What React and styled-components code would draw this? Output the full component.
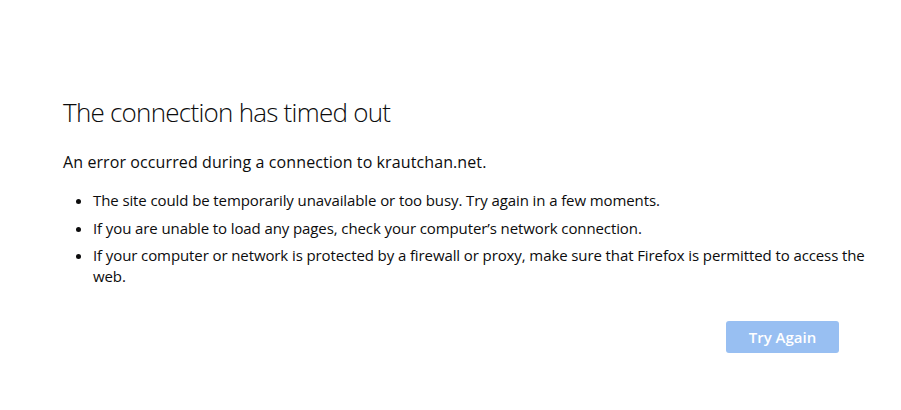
import React from 'react';
import styled, { createGlobalStyle } from 'styled-components';

const GlobalStyle = createGlobalStyle`
  html, body {
    margin: 0;
    padding: 0;
    background: #ffffff;
  }
  body {
    font-family: "Open Sans", "Noto Sans", sans-serif;
    color: #0c0c0d;
  }
`

const Page = styled.div`
  box-sizing: border-box;
  width: 901px;
  height: 410px;
  padding: 94px 0 0 63px;
`

const Container = styled.div`
  width: 776px;
  display: flex;
  flex-direction: column;
`

const Title = styled.h1`
  margin: 0;
  font-size: 26px;
  font-weight: 300;
  line-height: 36px;
  letter-spacing: -0.75px;
`

const Intro = styled.p`
  margin: 20px 0 0;
  font-size: 16px;
  line-height: 24px;
  letter-spacing: 0.1px;
`

// wider than the column so the long item wraps after "the", like the original
const List = styled.ul`
  margin: 16px -36px 0 0;
  padding: 0 0 0 30px;
`

const Item = styled.li`
  font-size: 15px;
  line-height: 21px;
  letter-spacing: -0.1px;
  margin-bottom: 6.5px;
`

const Actions = styled.div`
  display: flex;
  justify-content: flex-end;
  margin-top: 27px;
`

const Button = styled.button`
  width: 113px;
  height: 32px;
  border: none;
  border-radius: 3px;
  background: #0060df;
  opacity: 0.4;
  color: #ffffff;
  font-family: "Open Sans", "Noto Sans", sans-serif;
  font-size: 15px;
  font-weight: 600;
  cursor: default;
`

export default function App() {
  return (
    <>
      <GlobalStyle />
      <Page>
        <Container>
          <Title>The connection has timed out</Title>
          <Intro>An error occurred during a connection to krautchan.net.</Intro>
          <List>
            <Item>The site could be temporarily unavailable or too busy. Try again in a few moments.</Item>
            <Item>If you are unable to load any pages, check your computer’s network connection.</Item>
            <Item>If your computer or network is protected by a firewall or proxy, make sure that Firefox is permitted to access the web.</Item>
          </List>
          <Actions>
            <Button disabled>Try Again</Button>
          </Actions>
        </Container>
      </Page>
    </>
  );
}
